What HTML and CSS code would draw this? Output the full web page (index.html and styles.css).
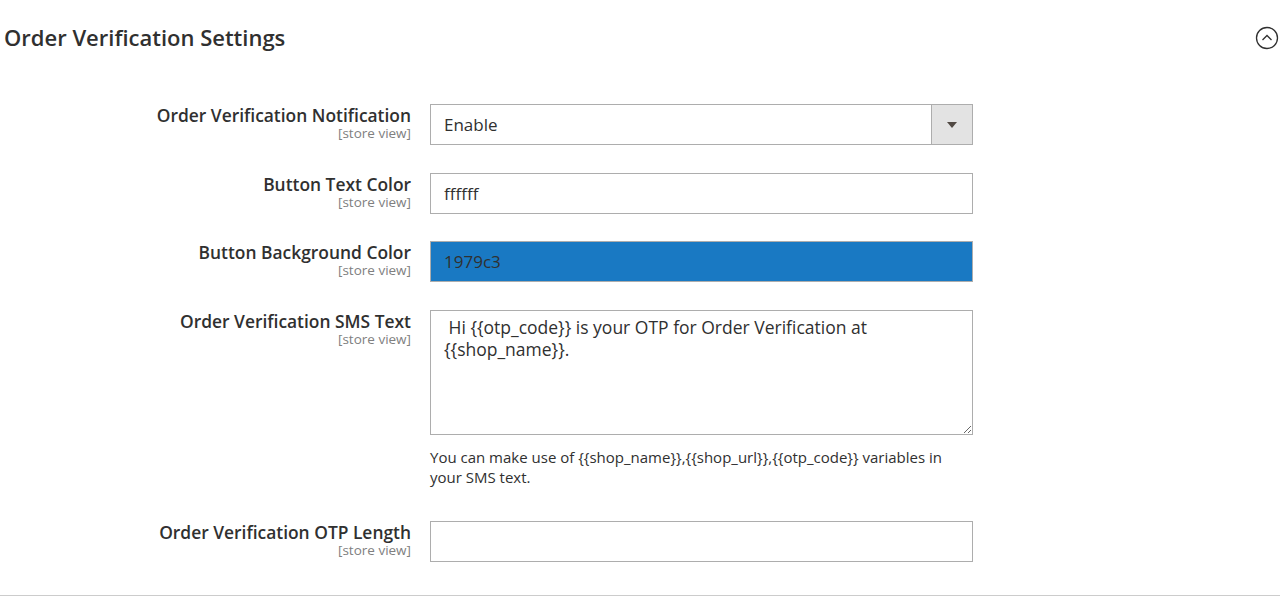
FILE: index.html
```html
<!DOCTYPE html>
<html>
<head>
    <title>Order Verification Settings</title>
    <link rel="stylesheet" href="styles.css">
</head>
<body>
    <div class="section">
        <div class="section-head">
            <h2>Order Verification Settings</h2>
            <span class="collapse-btn">
                <svg width="24" height="24" viewBox="0 0 24 24">
                    <circle cx="12" cy="12" r="10.5" fill="none" stroke="#303030" stroke-width="1.3"/>
                    <path d="M7.5 14 L12 9.5 L16.5 14" fill="none" stroke="#303030" stroke-width="1.3"/>
                </svg>
            </span>
        </div>

        <div class="fields">
            <div class="field">
                <div class="label">
                    <span class="name">Order Verification Notification</span>
                    <span class="scope">[store view]</span>
                </div>
                <div class="control">
                    <div class="select">
                        <span class="value">Enable</span>
                        <span class="arrow"></span>
                    </div>
                </div>
            </div>

            <div class="field">
                <div class="label">
                    <span class="name">Button Text Color</span>
                    <span class="scope">[store view]</span>
                </div>
                <div class="control">
                    <input class="input" type="text" value="ffffff">
                </div>
            </div>

            <div class="field">
                <div class="label">
                    <span class="name">Button Background Color</span>
                    <span class="scope">[store view]</span>
                </div>
                <div class="control">
                    <input class="input input-blue" type="text" value="1979c3">
                </div>
            </div>

            <div class="field">
                <div class="label">
                    <span class="name">Order Verification SMS Text</span>
                    <span class="scope">[store view]</span>
                </div>
                <div class="control">
                    <textarea class="textarea"> Hi {{otp_code}} is your OTP for Order Verification at {{shop_name}}.</textarea>
                    <div class="note">You can make use of {{shop_name}},{{shop_url}},{{otp_code}} variables in your SMS text.</div>
                </div>
            </div>

            <div class="field">
                <div class="label">
                    <span class="name">Order Verification OTP Length</span>
                    <span class="scope">[store view]</span>
                </div>
                <div class="control">
                    <input class="input" type="text" value="">
                </div>
            </div>
        </div>
    </div>
</body>
</html>
```

FILE: styles.css
```css
body {
    margin: 0;
    padding: 0;
    font-family: "Open Sans", sans-serif;
    color: #303030;
    background-color: #fff;
}

.section {
    height: 595px;
    border-bottom: 1px solid #cccccc;
}

.section-head {
    display: flex;
    justify-content: space-between;
    align-items: center;
    padding: 24px 1px 0 4px;
}

.section-head h2 {
    margin: 0;
    font-size: 22px;
    font-weight: 600;
    line-height: 26px;
    color: #303030;
}

.collapse-btn {
    display: flex;
    width: 24px;
    height: 24px;
    margin-top: 2px;
}

.fields {
    margin-top: 54px;
}

.field {
    display: grid;
    grid-template-columns: 411px 543px;
    column-gap: 19px;
    margin-bottom: 27.7px;
}

.label {
    display: flex;
    flex-direction: column;
    align-items: flex-end;
    padding-top: 1px;
    text-align: right;
}

.label .name {
    font-size: 17.4px;
    font-weight: 600;
    line-height: 20px;
}

.label .scope {
    font-size: 13.5px;
    color: #808080;
    line-height: 16px;
}

.select,
.input,
.textarea {
    box-sizing: border-box;
    width: 543px;
    border: 1px solid #adadad;
    background: #fff;
    font-family: "Open Sans", sans-serif;
    font-size: 17px;
    color: #303030;
}

.select {
    display: flex;
    height: 41px;
}

.select .value {
    flex: 1;
    padding-left: 13px;
    line-height: 39px;
}

.select .arrow {
    width: 40px;
    background: #e3e3e3;
    border-left: 1px solid #adadad;
    position: relative;
}

.select .arrow::after {
    content: "";
    position: absolute;
    left: 15px;
    top: 17px;
    border-left: 5px solid transparent;
    border-right: 5px solid transparent;
    border-top: 6px solid #514943;
}

.input {
    display: block;
    height: 41px;
    padding: 0 13px;
    margin: 0;
    outline: none;
}

.input-blue {
    background: #1979c3;
}

.textarea {
    display: block;
    height: 125px;
    margin: 0;
    padding: 5px 13px;
    font-size: 17.5px;
    line-height: 22px;
    resize: vertical;
    outline: none;
}

.note {
    margin-top: 12px;
    margin-bottom: 6px;
    font-size: 15px;
    line-height: 20px;
    color: #303030;
}
```
